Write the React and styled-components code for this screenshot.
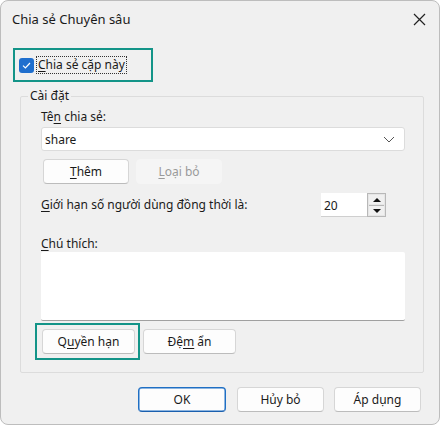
import React from "react";
import styled, { createGlobalStyle } from "styled-components";

const GlobalStyle = createGlobalStyle`
  html, body {
    margin: 0;
    padding: 0;
    background: #ffffff;
  }
  body {
    font-family: "Noto Sans", "Open Sans", sans-serif;
    font-size: 12px;
    color: #1a1a1a;
  }
  * {
    box-sizing: border-box;
  }
`;

const Window = styled.div`
  width: 440px;
  height: 425px;
  background: #f0f0f0;
  border: 1px solid #bdbdbd;
  border-radius: 8px;
  display: flex;
  flex-direction: column;
  overflow: hidden;
`;

const TitleBar = styled.div`
  height: 36px;
  display: flex;
  align-items: center;
  justify-content: space-between;
  padding: 0 12px 0 11px;
  font-size: 13px;
`;

const CloseButton = styled.div`
  width: 16px;
  height: 16px;
  display: flex;
  align-items: center;
  justify-content: center;
`;

const Body = styled.div`
  display: flex;
  flex-direction: column;
  padding: 11px 15px 0 19px;
`;

// teal marker drawn round a control
const Marker = styled.div`
  display: inline-flex;
  align-items: center;
  align-self: flex-start;
  border: 2px solid #139488;
  height: ${({ h }) => h}px;
  width: ${({ w }) => w}px;
  padding-left: ${({ pl }) => pl}px;
  margin-left: ${({ ml }) => ml || 0}px;
`;

const CheckRow = styled.label`
  display: flex;
  align-items: center;
  gap: 2px;
`;

const CheckBox = styled.span`
  width: 15px;
  height: 15px;
  border-radius: 3px;
  background: #1f6fce;
  display: flex;
  align-items: center;
  justify-content: center;
`;

const FocusText = styled.span`
  border: 1px dotted #333;
  padding: 0 1px 1px 1px;
  line-height: 15px;
`;

const Group = styled.fieldset`
  margin: 7px 0 0 0;
  padding: 0 18px 0 20px;
  border: 1px solid #dcdcdc;
  border-radius: 2px;
  height: 284px;
  min-width: 0;
  display: flex;
  flex-direction: column;
`;

const Legend = styled.legend`
  padding: 0 2px;
  margin-left: -13px;
  line-height: 14px;
`;

const FieldLabel = styled.div`
  line-height: 16px;
  margin-top: ${({ mt }) => mt}px;
  margin-bottom: ${({ mb }) => mb || 0}px;
`;

const Combo = styled.div`
  height: 24px;
  background: #ffffff;
  border: 1px solid #dcdcdc;
  border-radius: 3px;
  display: flex;
  align-items: center;
  justify-content: space-between;
  padding: 0 9px 0 3px;
`;

const ButtonRow = styled.div`
  display: flex;
  gap: ${({ gap }) => gap}px;
  margin-top: ${({ mt }) => mt}px;
  padding-left: ${({ pl }) => pl || 0}px;
  align-items: center;
`;

const Button = styled.button`
  width: ${({ w }) => w}px;
  height: 25px;
  margin-left: ${({ ml }) => ml || 0}px;
  font-family: inherit;
  font-size: 12px;
  color: ${({ disabled }) => (disabled ? "#9a9a9a" : "#1a1a1a")};
  background: ${({ disabled }) => (disabled ? "#f5f5f5" : "#fdfdfd")};
  border: ${({ primary, disabled }) =>
    primary
      ? "1px solid #1f6fc4"
      : disabled
      ? "1px solid #f5f5f5"
      : "1px solid #d6d6d6"};
  border-bottom-color: ${({ primary, disabled }) =>
    primary ? "#1a5fae" : disabled ? "#f5f5f5" : "#bcbcbc"};
  box-shadow: ${({ primary }) => (primary ? "inset 0 0 0 0.5px #1f6fc4" : "none")};
  border-radius: 4px;
  padding: 0;
  display: flex;
  align-items: center;
  justify-content: center;
`;

const U = styled.span`
  text-decoration: underline;
  text-underline-offset: 2px;
`;

const LimitRow = styled.div`
  display: flex;
  align-items: center;
  justify-content: space-between;
  margin-top: 9px;
  padding-right: 19px;
`;

const LimitLabel = styled.span`
  line-height: 16px;
`;

const Spinner = styled.div`
  display: flex;
  height: 24px;
`;

const SpinInput = styled.div`
  width: 46px;
  height: 24px;
  background: #ffffff;
  border-bottom: 1px solid #cfcfcf;
  padding: 5px 0 0 3px;
  line-height: 16px;
`;

const SpinButtons = styled.div`
  width: 19px;
  display: flex;
  flex-direction: column;
  border: 1px solid #b8b8b8;
  background: #e6e6e6;
`;

const SpinButton = styled.div`
  flex: 1;
  display: flex;
  align-items: center;
  justify-content: center;
  border-top: ${({ bottom }) => (bottom ? "1px solid #b8b8b8" : "none")};
  background: #f0f0f0;
  margin: 1px;
  margin-top: ${({ bottom }) => (bottom ? 0 : 1)}px;
`;

const Arrow = styled.span`
  width: 0;
  height: 0;
  border-left: 4px solid transparent;
  border-right: 4px solid transparent;
  ${({ down }) =>
    down ? "border-top: 4px solid #111;" : "border-bottom: 4px solid #111;"}
`;

const TextArea = styled.div`
  height: 69px;
  background: #ffffff;
  border-bottom: 1px solid #a0a0a0;
  border-radius: 2px;
`;

const Footer = styled.div`
  display: flex;
  justify-content: flex-end;
  gap: 10px;
  padding: 14px 3px 0 0;
`;

const App = () => {
  return (
    <>
      <GlobalStyle />
      <Window>
        <TitleBar>
          <span>Chia sẻ Chuyên sâu</span>
          <CloseButton>
            <svg width="13" height="13" viewBox="0 0 13 13">
              <path
                d="M1 1 L12 12 M12 1 L1 12"
                stroke="#222"
                strokeWidth="1.2"
                fill="none"
              />
            </svg>
          </CloseButton>
        </TitleBar>
        <Body>
          <Marker w={140} h={34} pl={4} ml={-7}>
            <CheckRow>
              <CheckBox>
                <svg width="9" height="7" viewBox="0 0 9 7">
                  <path
                    d="M1 3.6 L3.4 6 L8 1"
                    stroke="#fff"
                    strokeWidth="1.2"
                    fill="none"
                  />
                </svg>
              </CheckBox>
              <FocusText>
                <U>C</U>hia sẻ cặp này
              </FocusText>
            </CheckRow>
          </Marker>
          <Group>
            <Legend>Cài đặt</Legend>
            <FieldLabel mt={6} mb={2}>
              Tê<U>n</U> chia sẻ:
            </FieldLabel>
            <Combo>
              <span>share</span>
              <svg width="12" height="7" viewBox="0 0 12 7">
                <path
                  d="M1 1 L6 6 L11 1"
                  stroke="#555"
                  strokeWidth="1"
                  fill="none"
                />
              </svg>
            </Combo>
            <ButtonRow gap={7} mt={8} pl={2}>
              <Button w={86}>
                <span>
                  <U>T</U>hêm
                </span>
              </Button>
              <Button w={86} disabled>
                <span>
                  <U>L</U>oại bỏ
                </span>
              </Button>
            </ButtonRow>
            <LimitRow>
              <LimitLabel>
                <U>G</U>iới hạn số người dùng đồng thời là:
              </LimitLabel>
              <Spinner>
                <SpinInput>20</SpinInput>
                <SpinButtons>
                  <SpinButton>
                    <Arrow />
                  </SpinButton>
                  <SpinButton bottom>
                    <Arrow down />
                  </SpinButton>
                </SpinButtons>
              </Spinner>
            </LimitRow>
            <FieldLabel mt={19}>
              <U>C</U>hú thích:
            </FieldLabel>
            <TextArea />
            <ButtonRow gap={0} mt={2}>
              <Marker w={105} h={37} pl={5} ml={-6}>
                <Button w={93}>
                  <span>
                    Q<U>u</U>yền hạn
                  </span>
                </Button>
              </Marker>
              <Button w={93} ml={3}>
                <span>
                  Đệ<U>m</U> ẩn
                </span>
              </Button>
            </ButtonRow>
          </Group>
          <Footer>
            <Button w={88} primary>
              OK
            </Button>
            <Button w={87} ml={1}>
              Hủy bỏ
            </Button>
            <Button w={87}>Áp dụng</Button>
          </Footer>
        </Body>
      </Window>
    </>
  );
};

export default App;
